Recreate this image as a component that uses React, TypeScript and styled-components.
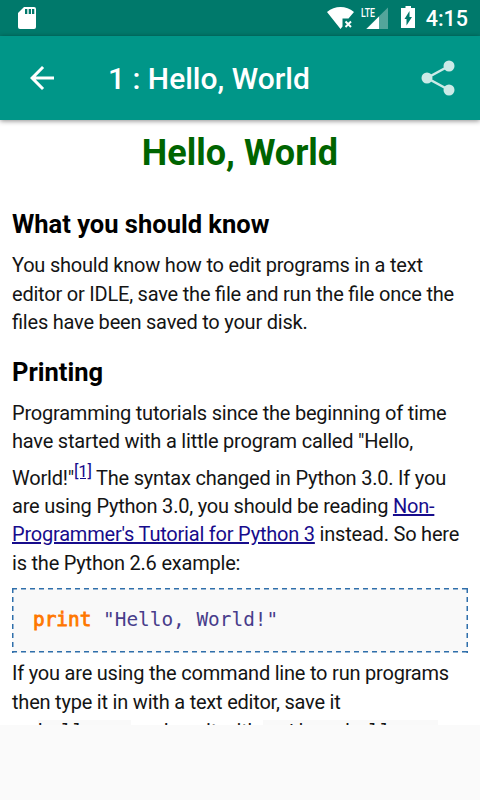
import React from 'react';
import styled, { createGlobalStyle } from 'styled-components';

const Global = createGlobalStyle`
  * { box-sizing: border-box; }
  body { margin: 0; background: #fafafa; font-family: Roboto, sans-serif; }
`;
const Screen = styled.div`
  width: 480px; height: 800px; display: flex; flex-direction: column; background: #fafafa; overflow: hidden;
`;
const StatusBar = styled.div`
  height: 36px; flex: none; background: #00796b; color: #fff; display: flex; align-items: center;
  justify-content: space-between; padding: 0 12px 0 14px;
`;
const StatusIcons = styled.div`
  display: flex; align-items: center; height: 36px;
`;
const Glyph = styled.svg`
  display: block; flex: none;
`;
const Clock = styled.span`
  font-size: 21.5px; font-weight: 500; line-height: 36px; margin-left: 7px; padding-top: 2px;
`;
const AppBar = styled.header`
  height: 84px; flex: none; background: #009688; color: #fff; display: flex; align-items: center;
  padding: 0 20px 0 24px; box-shadow: 0 1px 5px rgba(0,0,0,.45); z-index: 1;
`;
const Title = styled.h1`
  margin: 2px 0 0 48px; flex: 1; font-size: 30px; font-weight: 500; line-height: 36px; white-space: nowrap;
`;
const Article = styled.article`
  height: 605px; flex: none; background: #fff; overflow: hidden; padding: 12px 12px 0;
  color: #000;
`;
const PageTitle = styled.h2`
  margin: 0; text-align: center; color: #006400; font-size: 36px; line-height: 42px; font-weight: 700;
`;
const Heading = styled.h3<{ $top: number }>`
  margin: ${p => p.$top}px 0 12px; font-size: 25.5px; line-height: 30px; font-weight: 700;
`;
const Text = styled.p`
  margin: 0; white-space: nowrap; font-size: 20px; line-height: 28.5px; color: #141414;
  letter-spacing: -0.21px; font-feature-settings: "liga" 1;
`;
const Link = styled.a`
  color: #170c8c; text-decoration: underline;
`;
const Ref = styled.sup`
  font-size: 16.9px; line-height: 30px;
`;
const Code = styled.pre`
  --dash: #2f6fab 0 5px, transparent 5px 9px;
  --soft: #2f6fab80 0 5px, transparent 5px 9px;
  margin: 11px 0 6px; height: 65px; padding: 0 21px;
  background:
    repeating-linear-gradient(90deg, var(--dash)) 0 0 / 100% 1px no-repeat,
    repeating-linear-gradient(90deg, var(--soft)) 0 0 / 100% 2px no-repeat,
    repeating-linear-gradient(90deg, var(--dash)) 0 calc(100% - 1px) / 100% 1px no-repeat,
    repeating-linear-gradient(90deg, var(--soft)) 0 100% / 100% 2px no-repeat,
    repeating-linear-gradient(180deg, var(--dash)) 0 0 / 1px 100% no-repeat,
    repeating-linear-gradient(180deg, var(--soft)) 0 0 / 2px 100% no-repeat,
    repeating-linear-gradient(180deg, var(--dash)) 100% 0 / 1px 100% no-repeat,
    repeating-linear-gradient(180deg, var(--soft)) 100% 0 / 2px 100% no-repeat,
    #f9f9f9;
  font: 19.4px/63px "DejaVu Sans Mono", monospace; color: #483d8b;
`;
const Keyword = styled.span`
  color: #ff7700; -webkit-text-stroke: 0.8px #ff7700;
`;
const Inline = styled.code`
  font: 19.4px/31px "DejaVu Sans Mono", monospace; letter-spacing: 0; background: #f9f9f9;
`;

export default function App() {
  return (
    <Screen>
      <Global />
      <StatusBar>
        <Glyph width="26" height="36" viewBox="0 0 26 36">
          <path d="M10 7h10q2 0 2 2v18q0 2-2 2H6q-2 0-2-2V13z" fill="#fff" />
          <path d="M11 9h2.3v5H11zM14.7 9H17v5h-2.3zM18 9h2.3v5H18z" fill="#00796b" />
        </Glyph>
        <StatusIcons>
          <Glyph width="92" height="36" viewBox="0 0 92 36">
            <path d="M0 12C4 8.700 8.700 7 13.500 7S23 8.700 27 12L21.500 18.500H15.500V26.500L13.500 29z" fill="#fff" />
            <path d="M18.500 21.500l5.500 5.500M24 21.500l-5.500 5.500" stroke="#fff" strokeWidth="2" />
            <path d="M61 7.500V29H39z" fill="#fff" opacity=".33" />
            <path d="M52 16.500V29H39.500z" fill="#fff" />
            <text x="34" y="17" fontFamily="Roboto" fontSize="13.500" fontWeight="500" fill="#fff" textLength="14" lengthAdjust="spacingAndGlyphs">LTE</text>
            <path d="M78.500 6h5.500v2h4v20H74V8h4.500z" fill="#fff" />
            <path d="M82.500 11v6H85l-5.500 8.500V19H77.500z" fill="#00796b" />
          </Glyph>
          <Clock>4:15</Clock>
        </StatusIcons>
      </StatusBar>
      <AppBar>
        <Glyph width="36" height="36" viewBox="0 0 24 24" fill="#fff"><path d="M20 11H7.83l5.59-5.59L12 4l-8 8 8 8 1.41-1.41L7.83 13H20v-2z" /></Glyph>
        <Title>1 : Hello, World</Title>
        <Glyph width="40" height="40" viewBox="0 0 40 40">
          <path d="M29 8L7 20l22 12" stroke="#cceae7" strokeWidth="2.5" fill="none" />
          <g fill="#cceae7"><circle cx="29" cy="8" r="5.500" /><circle cx="7" cy="20" r="5.500" /><circle cx="29" cy="32" r="5.500" /></g>
        </Glyph>
      </AppBar>
      <Article>
        <PageTitle>Hello, World</PageTitle>
        <Heading $top={35}>What you should know</Heading>
        <Text>You should know how to edit programs in a text<br />editor or IDLE, save the file and run the file once the<br />files have been saved to your disk.</Text>
        <Heading $top={20}>Printing</Heading>
        <Text>Programming tutorials since the beginning of time<br />have started with a little program called "Hello,<br />World!"<Ref><Link>[1]</Link></Ref> The syntax changed in Python 3.0. If you<br />are using Python 3.0, you should be reading <Link>Non-<br />Programmer's Tutorial for Python 3</Link> instead. So here<br />is the Python 2.6 example:</Text>
        <Code><Keyword>print</Keyword> "Hello, World!"</Code>
        <Text>If you are using the command line to run programs<br />then type it in with a text editor, save it<br />as <Inline>hello.py</Inline> and run it with <Inline>python hello.py</Inline></Text>
      </Article>
    </Screen>
  );
}
